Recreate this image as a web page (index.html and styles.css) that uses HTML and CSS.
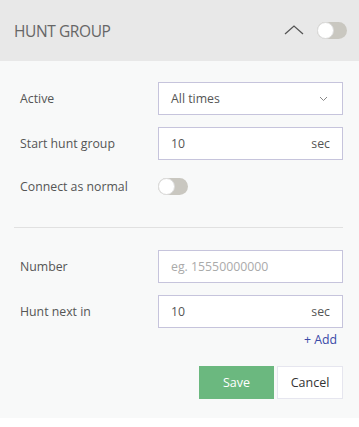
FILE: index.html
```html
<!DOCTYPE html>
<html lang="en">
<head>
    <meta charset="UTF-8">
    <meta name="viewport" content="width=device-width, initial-scale=1.0">
    <title>Hunt Group</title>
    <link rel="stylesheet" href="styles.css">
</head>
<body>

<div class="panel">
    <div class="panel-head">
        <h2 class="panel-title">HUNT GROUP</h2>
        <div class="head-actions">
            <svg class="chevron-up" width="20" height="10" viewBox="0 0 20 10">
                <path d="M1 9 L10 1 L19 9" fill="none" stroke="#555" stroke-width="1.3"/>
            </svg>
            <span class="toggle"></span>
        </div>
    </div>

    <div class="panel-body">
        <div class="row">
            <label class="row-label">Active</label>
            <div class="field select-field">
                <span>All times</span>
                <svg width="9" height="6" viewBox="0 0 9 6">
                    <path d="M1 1 L4.5 4.5 L8 1" fill="none" stroke="#888" stroke-width="1"/>
                </svg>
            </div>
        </div>
        <div class="row row-gap">
            <label class="row-label">Start hunt group</label>
            <div class="field">
                <span>10</span>
                <span class="unit">sec</span>
            </div>
        </div>
        <div class="row row-toggle">
            <label class="row-label">Connect as normal</label>
            <span class="toggle"></span>
        </div>

        <hr class="divider">

        <div class="row">
            <label class="row-label">Number</label>
            <div class="field">
                <span class="placeholder">eg. 15550000000</span>
            </div>
        </div>
        <div class="row row-gap">
            <label class="row-label">Hunt next in</label>
            <div class="field">
                <span>10</span>
                <span class="unit">sec</span>
            </div>
        </div>
        <div class="add-line">
            <a class="add-link" href="#">+ Add</a>
        </div>

        <div class="buttons">
            <button class="save-btn">Save</button>
            <button class="cancel-btn">Cancel</button>
        </div>
    </div>
</div>

</body>
</html>
```

FILE: styles.css
```css
body {
    margin: 0;
    font-family: "Open Sans", Arial, sans-serif;
    font-size: 12.3px;
    color: #555;
    background-color: #fff;
}
.panel {
    width: 100%;
}
.panel-head {
    height: 61px;
    background-color: #e8e8e8;
    display: flex;
    align-items: center;
    justify-content: space-between;
    padding: 0 12px 0 14px;
}
.panel-title {
    margin: 0;
    font-size: 15.5px;
    font-weight: normal;
    color: #666;
    letter-spacing: -0.4px;
}
.head-actions {
    display: flex;
    align-items: center;
    gap: 13px;
}
.chevron-up {
    display: block;
    margin-top: -2px;
}
.toggle {
    display: block;
    position: relative;
    width: 30px;
    height: 17px;
    border-radius: 9px;
    background-color: #c9c7c0;
}
.toggle::after {
    content: "";
    position: absolute;
    left: 0;
    top: 0;
    width: 15px;
    height: 15px;
    border-radius: 50%;
    background-color: #fff;
    border: 1px solid #dcdcdc;
}
.panel-body {
    background-color: #f8f9f9;
    padding: 21px 16px 19px 14px;
}
.row {
    display: flex;
    align-items: center;
    padding-left: 6px;
}
.row-gap {
    margin-top: 12px;
}
.row-label {
    width: 138px;
}
.field {
    flex: 1;
    height: 31px;
    border: 1px solid #c6c4dc;
    background-color: #fff;
    display: flex;
    align-items: center;
    justify-content: space-between;
    padding: 0 12px 0 12px;
}
.select-field {
    padding-right: 14px;
}
.select-field svg {
    display: block;
}
.placeholder {
    color: #aaa;
}
.row-toggle {
    margin-top: 17px;
    height: 18px;
}
.divider {
    border: none;
    border-top: 1px solid #e1e1e1;
    margin: 32px 0 22px;
}
.add-line {
    display: flex;
    justify-content: flex-end;
    padding-right: 6px;
    margin-top: 3px;
    height: 20px;
}
.add-link {
    color: #3b4aa8;
    text-decoration: none;
}
.buttons {
    display: flex;
    justify-content: flex-end;
    gap: 3px;
    margin-top: 15px;
}
.save-btn, .cancel-btn {
    height: 33px;
    font-family: "Open Sans", Arial, sans-serif;
    font-size: 12.5px;
    cursor: pointer;
}
.save-btn {
    width: 75px;
    border: none;
    background-color: #6bb87f;
    color: #fff;
}
.cancel-btn {
    width: 66px;
    border: 1px solid #e6e6ef;
    background-color: #fff;
    color: #333;
}
```
